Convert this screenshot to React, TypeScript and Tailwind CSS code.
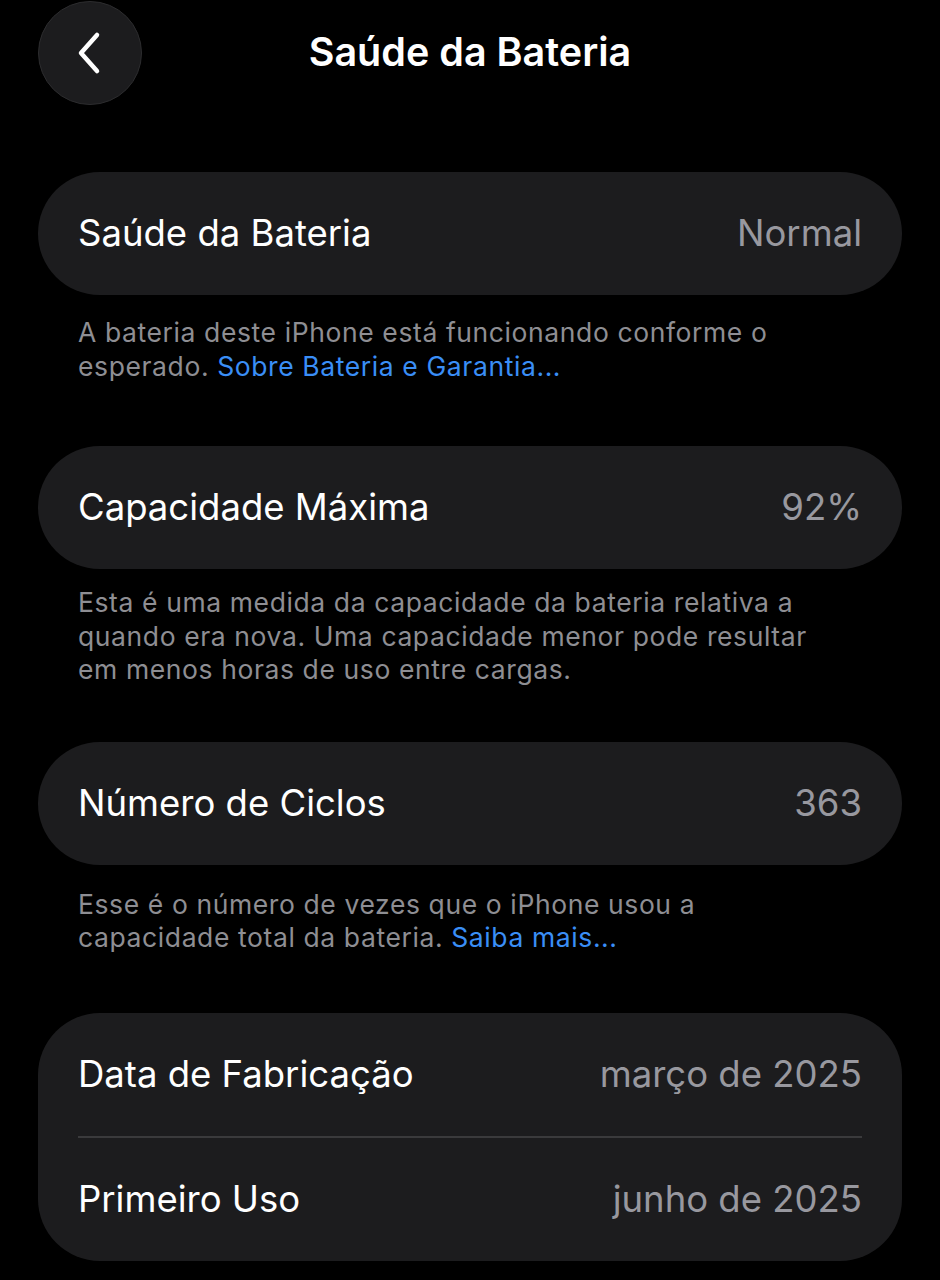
import React from "react";

const font = { fontFamily: "Inter, 'Noto Sans', sans-serif" };

const Row = ({ label, value }: { label: string; value: string }) => (
  <div className="flex h-[123px] items-center justify-between">
    <span className="text-[36.5px] text-white">{label}</span>
    <span className="text-[36.5px] text-[#98989f]">{value}</span>
  </div>
);

const Card = ({ children }: { children: React.ReactNode }) => (
  <div className="mx-[38px] rounded-[62px] bg-[#1c1c1e] px-[40px]">{children}</div>
);

const Note = ({ children, className }: { children: React.ReactNode; className: string }) => (
  <p className={`ml-[78px] w-[760px] text-[26.5px] leading-[33.5px] tracking-[0.6px] text-[#8e8e93] ${className}`}>
    {children}
  </p>
);

export default function App() {
  return (
    <div className="min-h-[1280px] w-[940px] bg-black" style={font}>
      <div className="relative flex h-[106px] items-center justify-center">
        <button className="absolute left-[38px] top-[1px] flex h-[104px] w-[104px] items-center justify-center rounded-full border border-[#2c2c2e] bg-[#1c1c1e]">
          <svg width="34" height="44" viewBox="0 0 34 44" fill="none">
            <path d="M24 4 L8 22 L24 40" stroke="white" strokeWidth="4.5" strokeLinecap="round" strokeLinejoin="round" />
          </svg>
        </button>
        <h1 className="text-[39.5px] font-semibold text-white">Saúde da Bateria</h1>
      </div>

      <div className="mt-[66px]">
        <Card>
          <Row label="Saúde da Bateria" value="Normal" />
        </Card>
        <Note className="mt-[21px]">
          A bateria deste iPhone está funcionando conforme o esperado.{" "}
          <span className="text-[#3a8ef6]">Sobre Bateria e Garantia...</span>
        </Note>
      </div>

      <div className="mt-[63px]">
        <Card>
          <Row label="Capacidade Máxima" value="92%" />
        </Card>
        <Note className="mt-[17px]">
          Esta é uma medida da capacidade da bateria relativa a quando era nova. Uma capacidade menor pode resultar em menos horas de uso entre cargas.
        </Note>
      </div>

      <div className="mt-[55px]">
        <Card>
          <Row label="Número de Ciclos" value="363" />
        </Card>
        <Note className="mt-[23px]">
          Esse é o número de vezes que o iPhone usou a capacidade total da bateria.{" "}
          <span className="text-[#3a8ef6]">Saiba mais...</span>
        </Note>
      </div>

      <div className="mt-[58px]">
        <Card>
          <Row label="Data de Fabricação" value="março de 2025" />
          <div className="h-[2px] bg-[#3a3a3c]" />
          <Row label="Primeiro Uso" value="junho de 2025" />
        </Card>
      </div>
    </div>
  );
}
